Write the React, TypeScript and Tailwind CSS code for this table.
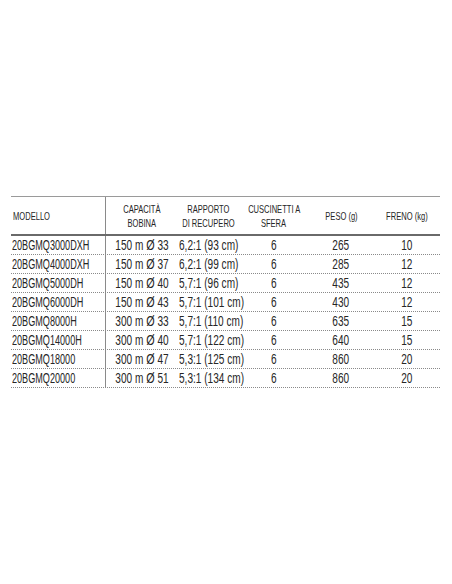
import type { ReactNode } from "react";

const rows = [
  { model: "20BGMQ3000DXH", cap: "150 m", d: "33", ratio: "6,2:1 (93 cm)", bearings: "6", weight: "265", drag: "10" },
  { model: "20BGMQ4000DXH", cap: "150 m", d: "37", ratio: "6,2:1 (99 cm)", bearings: "6", weight: "285", drag: "12" },
  { model: "20BGMQ5000DH", cap: "150 m", d: "40", ratio: "5,7:1 (96 cm)", bearings: "6", weight: "435", drag: "12" },
  { model: "20BGMQ6000DH", cap: "150 m", d: "43", ratio: "5,7:1 (101 cm)", bearings: "6", weight: "430", drag: "12" },
  { model: "20BGMQ8000H", cap: "300 m", d: "33", ratio: "5,7:1 (110 cm)", bearings: "6", weight: "635", drag: "15" },
  { model: "20BGMQ14000H", cap: "300 m", d: "40", ratio: "5,7:1 (122 cm)", bearings: "6", weight: "640", drag: "15" },
  { model: "20BGMQ18000", cap: "300 m", d: "47", ratio: "5,3:1 (125 cm)", bearings: "6", weight: "860", drag: "20" },
  { model: "20BGMQ20000", cap: "300 m", d: "51", ratio: "5,3:1 (134 cm)", bearings: "6", weight: "860", drag: "20" },
];

// column widths: modello | capacità | rapporto | cuscinetti | peso | freno
const cols = "grid grid-cols-[95px_71px_63px_68px_66px_66px]";

// condensed look: the font set has no DIN-like condensed face, so squeeze horizontally
const Narrow = ({ children, left }: { children: ReactNode; left?: boolean }) => (
  <span
    className={
      left
        ? "inline-block whitespace-nowrap scale-x-[0.72] origin-left"
        : "inline-block whitespace-nowrap scale-x-[0.72] origin-center"
    }
  >
    {children}
  </span>
);

export default function App() {
  return (
    <div
      className="min-h-[584px] w-[452px] bg-white pt-[196px] pl-[11px] text-[#262626]"
      style={{ fontFamily: '"Liberation Sans", Arial, sans-serif' }}
    >
      <div className="w-[429px] border-t border-[#9a9a9a]">
        {/* header */}
        <div className={`${cols} h-[39px] border-b-2 border-[#6a6a6a] text-[10.5px] leading-[14px]`}>
          <div className="flex items-center border-r border-[#8a8a8a] pl-[2px]">
            <Narrow left>MODELLO</Narrow>
          </div>
          <div className="flex flex-col items-center justify-center">
            <Narrow>CAPACITÀ</Narrow>
            <Narrow>BOBINA</Narrow>
          </div>
          <div className="flex flex-col items-center justify-center">
            <Narrow>RAPPORTO</Narrow>
            <Narrow>DI RECUPERO</Narrow>
          </div>
          <div className="flex flex-col items-center justify-center">
            <Narrow>CUSCINETTI A</Narrow>
            <Narrow>SFERA</Narrow>
          </div>
          <div className="flex items-center justify-center">
            <Narrow>PESO (g)</Narrow>
          </div>
          <div className="flex items-center justify-center">
            <Narrow>FRENO (kg)</Narrow>
          </div>
        </div>

        {/* data rows */}
        {rows.map((r) => (
          <div
            key={r.model}
            className={`${cols} h-[19px] border-b border-dotted border-[#8a8a8a] text-[14px] leading-[18px]`}
          >
            <div className="border-r border-[#8a8a8a] pl-[1px]">
              <span className="inline-block whitespace-nowrap scale-x-[0.65] origin-left">{r.model}</span>
            </div>
            <div className="flex justify-center">
              <Narrow>
                {r.cap} <span className="text-[15px] leading-[18px]">Ø</span> {r.d}
              </Narrow>
            </div>
            <div className="pl-[2px]">
              <Narrow left>{r.ratio}</Narrow>
            </div>
            <div className="text-center">
              <Narrow>{r.bearings}</Narrow>
            </div>
            <div className="text-center">
              <Narrow>{r.weight}</Narrow>
            </div>
            <div className="text-center">
              <Narrow>{r.drag}</Narrow>
            </div>
          </div>
        ))}
      </div>
    </div>
  );
}
